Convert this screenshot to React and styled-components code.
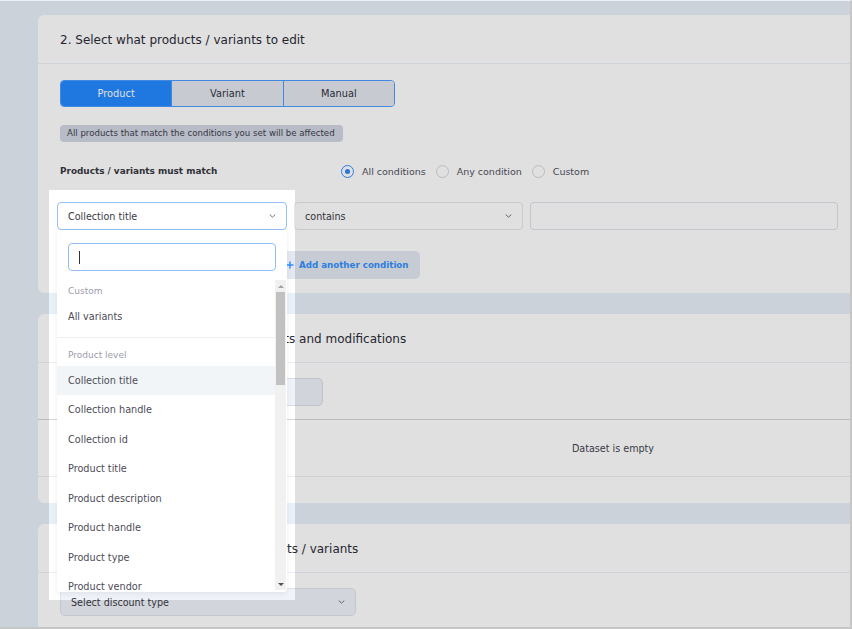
import React from "react";
import styled, { createGlobalStyle } from "styled-components";

const GlobalStyle = createGlobalStyle`
  html, body { margin: 0; padding: 0; }
  body { font-family: "DejaVu Sans", "Noto Sans", sans-serif; background: #fff; }
  * { box-sizing: border-box; }
`;

const Frame = styled.div`
  position: relative;
  width: 852px;
  height: 629px;
  overflow: hidden;
  background: #e8f0f9;
  border-top: 1px solid #eef1f5;
  border-right: 2px solid #c6c6c6;
  border-bottom: 2px solid #c6c6c6;
`;

const Main = styled.div`
  display: flex;
  flex-direction: column;
  gap: 21px;
  padding: 14px 0 0 38px;
`;

const Card = styled.section`
  flex-shrink: 0;
  width: 822px;
  background: #fff;
  border-radius: 6px;
`;

const CardHeader = styled.header`
  height: 49px;
  display: flex;
  align-items: center;
  padding: 2px 22px 0;
  border-bottom: 1px solid #ebf0f8;
`;

const Title = styled.h2`
  margin: 0;
  font-size: 12px;
  font-weight: 400;
  color: #2c2c38;
  white-space: nowrap;
`;

const CardBody = styled.div`
  display: flex;
  flex-direction: column;
  align-items: flex-start;
  padding: ${(p) => p.$pad || "16px 22px 14px"};
`;

const Tabs = styled.div`
  display: flex;
  width: 335px;
  height: 27px;
  border: 1px solid #4b9bff;
  border-radius: 4px;
  overflow: hidden;
`;

const Tab = styled.div`
  flex: 1;
  display: flex;
  align-items: center;
  justify-content: center;
  font-size: 9.8px;
  background: ${(p) => (p.$active ? "#2489ff" : "#e3e7ee")};
  color: ${(p) => (p.$active ? "#fff" : "#30303e")};
  & + & {
    border-left: 1px solid #4b9bff;
  }
`;

const Badge = styled.div`
  margin-top: 18px;
  height: 17px;
  line-height: 17px;
  padding: 0 8px 0 7px;
  border-radius: 4px;
  background: #d2d7e2;
  color: #3e3e50;
  font-size: 8.6px;
  white-space: nowrap;
`;

const MatchRow = styled.div`
  margin-top: 18px;
  height: 22px;
  display: flex;
  align-items: center;
`;

const MatchLabel = styled.div`
  width: 281px;
  font-size: 8.9px;
  font-weight: 700;
  color: #38383f;
`;

const RadioGroup = styled.div`
  display: flex;
  align-items: center;
  gap: 10px;
`;

const RadioItem = styled.label`
  display: flex;
  align-items: center;
  gap: 8px;
  font-size: 9.5px;
  color: #52525e;
`;

const RadioCircle = styled.span`
  width: 13px;
  height: 13px;
  border-radius: 50%;
  background: #fff;
  border: 1px solid ${(p) => (p.$checked ? "#3190ff" : "#d3d6de")};
  display: flex;
  align-items: center;
  justify-content: center;
  &::after {
    content: "";
    width: 5px;
    height: 5px;
    border-radius: 50%;
    background: ${(p) => (p.$checked ? "#2f86f5" : "transparent")};
  }
`;

const ConditionRow = styled.div`
  margin-top: 20px;
  margin-left: -3px;
  align-self: stretch;
  display: flex;
  gap: 7px;
`;

const SelectWrap = styled.div`
  position: relative;
  width: ${(p) => p.$w || "230px"};
  flex-shrink: 0;
`;

const SelectBox = styled.div`
  height: 28px;
  display: flex;
  align-items: center;
  justify-content: space-between;
  padding: 0 10px;
  border-radius: ${(p) => p.$radius || "4px"};
  border: 1px solid ${(p) => (p.$focused ? "#94c0f5" : p.$border || "#e3e6ec")};
  background: ${(p) => p.$bg || "#fff"};
  font-size: 9.6px;
  color: #3a3a44;
  white-space: nowrap;
`;

const TextInput = styled.div`
  flex: 1;
  height: 28px;
  border: 1px solid #dfe2ea;
  border-radius: 4px;
  background: #fff;
`;

const Spotlight = styled.div`
  position: absolute;
  left: -8px;
  top: -12px;
  width: 246px;
  height: 410px;
  box-shadow: 0 0 0 2000px rgba(0, 0, 0, 0.12);
  pointer-events: none;
  z-index: 5;
`;

const Menu = styled.div`
  position: absolute;
  top: 100%;
  left: 0;
  width: 100%;
  z-index: 6;
  display: flex;
  flex-direction: column;
  padding-bottom: 2px;
  background: #fff;
  border-radius: 4px;
  box-shadow: 0 2px 6px rgba(0, 0, 0, 0.07);
`;

const SearchArea = styled.div`
  padding: 13px 11px 9px;
`;

const SearchInput = styled.div`
  height: 28px;
  display: flex;
  align-items: center;
  padding-left: 10px;
  border: 1px solid #8fbdf5;
  border-radius: 4px;
`;

const Caret = styled.span`
  width: 1px;
  height: 13px;
  background: #333;
`;

const ListArea = styled.div`
  display: flex;
  height: 310px;
`;

const Items = styled.div`
  flex: 1;
  overflow: hidden;
`;

const Group = styled.div`
  padding: ${(p) => p.$pad || "0"};
  border-bottom: ${(p) => (p.$divider ? "1px solid #eef0f3" : "none")};
`;

const GroupLabel = styled.div`
  height: 22px;
  display: flex;
  align-items: center;
  padding-left: 11px;
  font-size: 9px;
  color: #9c9cab;
`;

const Item = styled.div`
  height: 29.5px;
  display: flex;
  align-items: center;
  padding-left: 11px;
  font-size: 9.7px;
  color: #4c4c57;
  white-space: nowrap;
  background: ${(p) => (p.$active ? "#f2f5f8" : "transparent")};
`;

const ScrollTrack = styled.div`
  width: 11px;
  margin-right: 1px;
  display: flex;
  flex-direction: column;
  align-items: center;
  background: #f1f1f1;
`;

const ArrowCell = styled.div`
  height: 12px;
  width: 100%;
  display: flex;
  align-items: center;
  justify-content: center;
  &::after {
    content: "";
    width: 0;
    height: 0;
    border-left: 3px solid transparent;
    border-right: 3px solid transparent;
    ${(p) =>
      p.$down
        ? "border-top: 3px solid #505050;"
        : "border-bottom: 3px solid #a3a3a3;"}
  }
`;

const Thumb = styled.div`
  width: 9px;
  height: 93px;
  background: #c1c1c1;
`;

const Spacer = styled.div`
  flex: 1;
`;

const AddRow = styled.div`
  margin-top: 21px;
  display: flex;
`;

const AddButton = styled.button`
  margin-left: 214px;
  height: 28px;
  display: flex;
  align-items: center;
  gap: 5px;
  padding: 0 11px 0 12px;
  border: none;
  border-radius: 5px;
  background: #e3e8f1;
  color: #3190ff;
  font-family: inherit;
  font-size: 8.7px;
  font-weight: 700;
`;

const GhostButton = styled.div`
  width: 263px;
  height: 28px;
  border-radius: 5px;
  border: 1px solid #d9dde5;
  background: #eef2f9;
`;

const TableWrap = styled.div`
  align-self: stretch;
  margin: 13px -22px 0;
  overflow: hidden;
  border-top: 1.5px solid #d6d6d6;
`;

const EmptyRow = styled.div`
  width: 1150px;
  height: 57px;
  display: flex;
  align-items: center;
  justify-content: center;
  border-bottom: 1px solid #ececf2;
  font-size: 9.6px;
  color: #454552;
`;

const Chevron = () => (
  <svg width="7" height="4" viewBox="0 0 7 4" fill="none">
    <path d="M1 0.8l2.5 2.4 2.5-2.4" stroke="#6f6f7e" strokeWidth="1" strokeLinecap="round" strokeLinejoin="round" />
  </svg>
);

const Plus = () => (
  <svg width="8" height="8" viewBox="0 0 8 8">
    <path d="M4 0.5v7M0.5 4h7" stroke="#3190ff" strokeWidth="1.5" />
  </svg>
);

const productFields = [
  "Collection title",
  "Collection handle",
  "Collection id",
  "Product title",
  "Product description",
  "Product handle",
  "Product type",
  "Product vendor",
];

export default function App() {
  return (
    <>
      <GlobalStyle />
      <Frame>
        <Main>
          <Card>
            <CardHeader>
              <Title>2. Select what products / variants to edit</Title>
            </CardHeader>
            <CardBody>
              <Tabs>
                <Tab $active>Product</Tab>
                <Tab>Variant</Tab>
                <Tab>Manual</Tab>
              </Tabs>
              <Badge>All products that match the conditions you set will be affected</Badge>
              <MatchRow>
                <MatchLabel>Products / variants must match</MatchLabel>
                <RadioGroup>
                  <RadioItem>
                    <RadioCircle $checked />
                    All conditions
                  </RadioItem>
                  <RadioItem>
                    <RadioCircle />
                    Any condition
                  </RadioItem>
                  <RadioItem>
                    <RadioCircle />
                    Custom
                  </RadioItem>
                </RadioGroup>
              </MatchRow>
              <ConditionRow>
                <SelectWrap>
                  <SelectBox $focused>
                    Collection title
                    <Chevron />
                  </SelectBox>
                  <Spotlight />
                  <Menu>
                    <SearchArea>
                      <SearchInput>
                        <Caret />
                      </SearchInput>
                    </SearchArea>
                    <ListArea>
                      <Items>
                        <Group $divider $pad="0 0 5px">
                          <GroupLabel>Custom</GroupLabel>
                          <Item>All variants</Item>
                        </Group>
                        <Group $pad="6px 0 0">
                          <GroupLabel>Product level</GroupLabel>
                          {productFields.map((f, i) => (
                            <Item key={f} $active={i === 0}>
                              {f}
                            </Item>
                          ))}
                        </Group>
                      </Items>
                      <ScrollTrack>
                        <ArrowCell />
                        <Thumb />
                        <Spacer />
                        <ArrowCell $down />
                      </ScrollTrack>
                    </ListArea>
                  </Menu>
                </SelectWrap>
                <SelectWrap $w="229px">
                  <SelectBox>
                    contains
                    <Chevron />
                  </SelectBox>
                </SelectWrap>
                <TextInput />
              </ConditionRow>
              <AddRow>
                <AddButton>
                  <Plus />
                  Add another condition
                </AddButton>
              </AddRow>
            </CardBody>
          </Card>

          <Card>
            <CardHeader>
              <Title>3. Preview the list of matched products and modifications</Title>
            </CardHeader>
            <CardBody $pad="15px 22px 26px">
              <GhostButton />
              <TableWrap>
                <EmptyRow>Dataset is empty</EmptyRow>
              </TableWrap>
            </CardBody>
          </Card>

          <Card>
            <CardHeader>
              <Title>4. Choose the discount for the products / variants</Title>
            </CardHeader>
            <CardBody $pad="15px 22px 20px">
              <SelectWrap $w="296px">
                <SelectBox $bg="#f0f3fa" $border="#e0e3ea" $radius="5px">
                  Select discount type
                  <Chevron />
                </SelectBox>
              </SelectWrap>
            </CardBody>
          </Card>
        </Main>
      </Frame>
    </>
  );
}
